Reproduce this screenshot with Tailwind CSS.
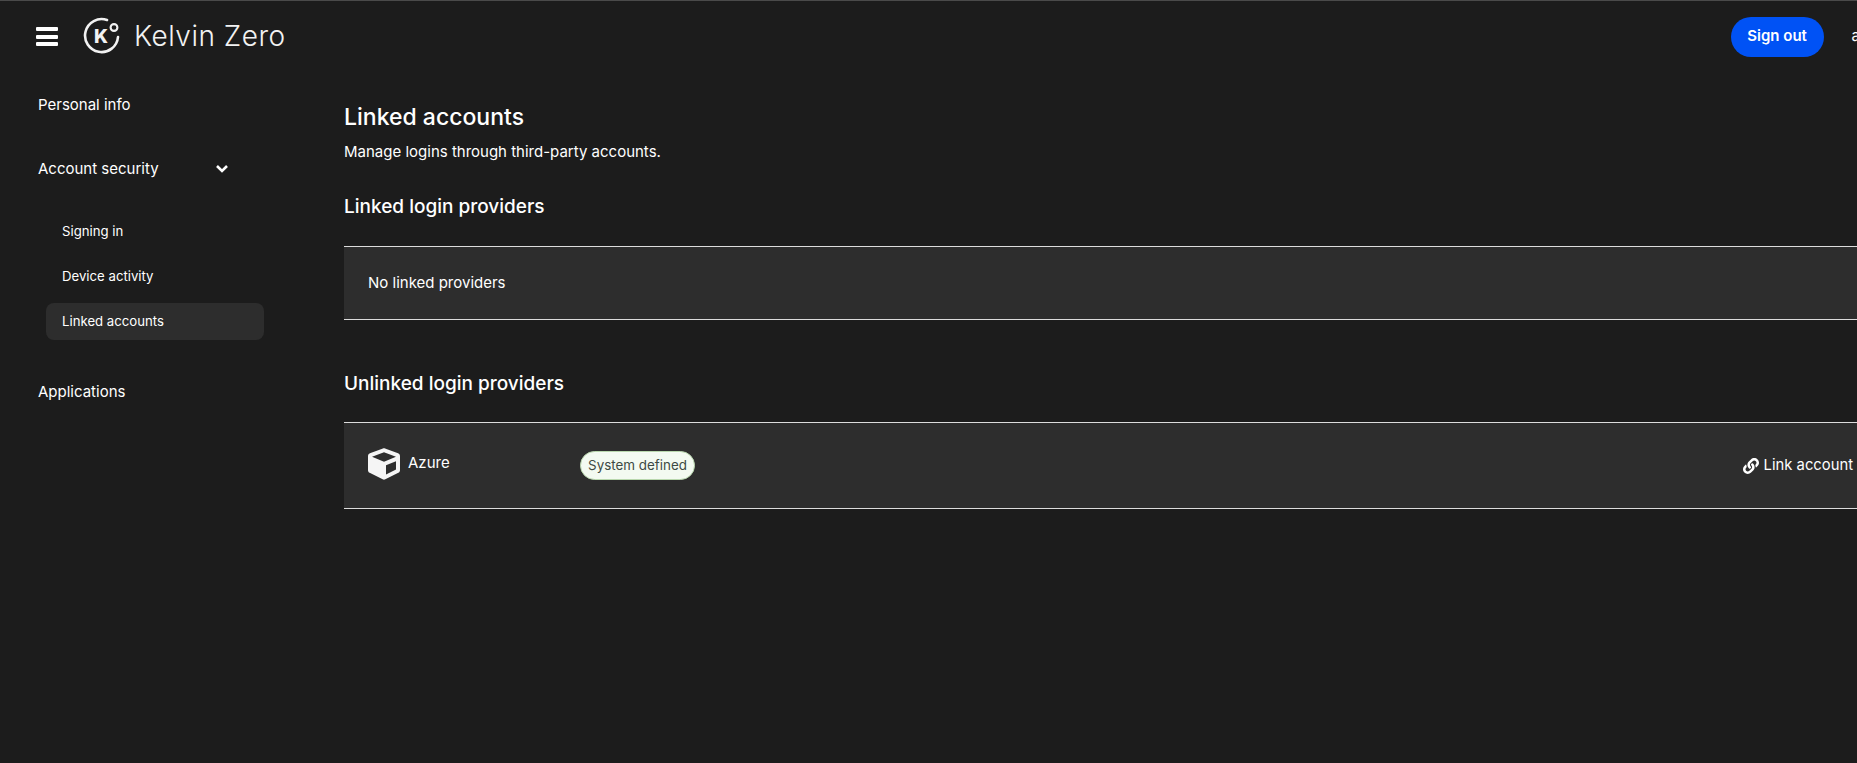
<!DOCTYPE html>
<html lang="en">
<head>
  <meta charset="UTF-8" />
  <title>Linked accounts</title>
  <script src="https://cdn.jsdelivr.net/npm/@tailwindcss/browser@4"></script>
</head>
<body class="bg-[#1c1c1c] text-white font-['Inter','Liberation_Sans',sans-serif] h-screen overflow-hidden">
  <div class="w-[1890px] h-full border-t border-[#4a4a4a]">

    <!-- Header -->
    <header class="h-[71px] flex items-center">
      <button class="ml-9 w-[22px] h-[19px] flex flex-col justify-between">
        <span class="block h-[4px] bg-white rounded-[1px]"></span>
        <span class="block h-[4px] bg-white rounded-[1px]"></span>
        <span class="block h-[4px] bg-white rounded-[1px]"></span>
      </button>
      <svg class="ml-[25px] mb-[1px]" width="38" height="38" viewBox="0 0 38 38" fill="none">
        <path d="M24 3 A16.5 16.5 0 1 0 35 20" stroke="#f2f2f2" stroke-width="2.6" stroke-linecap="round" />
        <circle cx="31" cy="10.5" r="3.4" stroke="#f2f2f2" stroke-width="2.1" />
        <text x="11" y="26" font-family="Inter, sans-serif" font-size="19" font-weight="800" fill="#f2f2f2">K</text>
      </svg>
      <span class="ml-[13px] mb-[2px] text-[28px] font-light tracking-[0.5px] text-[#f2f2f2]">Kelvin Zero</span>
      <div class="ml-auto flex items-center">
        <button class="w-[93px] h-10 rounded-full bg-[#0052f5] text-[15px] font-semibold">Sign out</button>
        <span class="ml-[28px] mr-[30px] text-[15px]">a</span>
      </div>
    </header>

    <div class="flex">
      <!-- Sidebar -->
      <nav class="w-[344px] shrink-0 pl-[38px] text-[15px]">
        <a class="flex items-center h-6 mt-[21px]">Personal info</a>
        <a class="flex items-center h-6 mt-10 w-[191px] justify-between">
          Account security
          <svg width="14" height="10" viewBox="0 0 14 10" fill="none" stroke="white" stroke-width="2.6"><path d="M2 2 L7 7 L12 2" /></svg>
        </a>
        <ul class="mt-[32px] -ml-[38px] pl-[46px] text-[13.2px]">
          <li class="w-[218px] h-[37px] pl-4 flex items-center">Signing in</li>
          <li class="w-[218px] h-[37px] pl-4 flex items-center mt-2">Device activity</li>
          <li class="w-[218px] h-[37px] pl-4 flex items-center mt-2 bg-[#2d2d2d] rounded-lg">Linked accounts</li>
        </ul>
        <a class="flex items-center h-6 mt-[40px]">Applications</a>
      </nav>

      <!-- Main -->
      <main class="w-[1533px] pt-[29px]">
        <h1 class="text-[23px] font-medium leading-8">Linked accounts</h1>
        <p class="text-[15px] leading-5 mt-[9px]">Manage logins through third-party accounts.</p>

        <h2 class="text-[19px] font-medium leading-7 mt-[31px]">Linked login providers</h2>
        <div class="mt-[25px] h-[74px] border-y border-[#dcdcdc] bg-[#2d2d2d] pl-6 flex items-center text-[15px]">
          No linked providers
        </div>

        <h2 class="text-[19px] font-medium leading-7 mt-[50px]">Unlinked login providers</h2>
        <div class="mt-[24px] h-[87px] border-y border-[#dcdcdc] bg-[#2d2d2d] pl-6 pr-6 flex items-center">
          <div class="w-[212px] flex items-center gap-2 mb-1">
            <svg class="w-8 h-8" viewBox="0 0 512 512" fill="#f5f5f5"><path d="M239.1 6.3l-208 78c-18.7 7-31.1 25-31.1 45v225.1c0 18.2 10.3 34.8 26.5 42.9l208 104c13.5 6.8 29.4 6.8 42.9 0l208-104c16.3-8.1 26.5-24.8 26.5-42.9V129.3c0-20-12.4-37.9-31.1-44.9l-208-78C262 2.2 250 2.2 239.1 6.3zM256 68.4l192 72v1.1l-192 78-192-78v-1.1l192-72zm32 356V275.5l160-65v133.9l-160 80z"/></svg>
            <span class="text-[15px]">Azure</span>
          </div>
          <span class="h-[29px] w-[115px] flex items-center justify-center rounded-full bg-[#f3faf1] border border-[#b9d8ae] text-[13.4px] text-[#3d4a44]">System defined</span>
          <a class="ml-auto flex items-center gap-[5px] text-[14.8px]">
            <svg class="w-4 h-4" viewBox="0 0 512 512" fill="white"><path d="M326.612 185.391c59.747 59.809 58.927 155.698.36 214.59-.11.12-.24.25-.36.37l-67.2 67.2c-59.27 59.27-155.699 59.262-214.96 0-59.27-59.26-59.27-155.7 0-214.96l37.106-37.106c9.84-9.84 26.786-3.3 27.294 10.606.648 17.722 3.826 35.527 9.69 52.721 1.986 5.822.567 12.262-3.783 16.612l-13.087 13.087c-28.026 28.026-28.905 73.66-1.155 101.96 28.024 28.579 74.086 28.749 102.325.51l67.2-67.19c28.191-28.191 28.073-73.757 0-101.83-3.701-3.694-7.429-6.564-10.341-8.569a16.037 16.037 0 0 1-6.947-12.606c-.396-10.567 3.348-21.456 11.698-29.806l21.054-21.055c5.521-5.521 14.182-6.199 20.584-1.731a152.482 152.482 0 0 1 20.522 17.197zM467.547 44.449c-59.261-59.262-155.69-59.27-214.96 0l-67.2 67.2c-.12.12-.25.25-.36.37-58.566 58.892-59.387 154.781.36 214.59a152.454 152.454 0 0 0 20.521 17.196c6.402 4.468 15.064 3.789 20.584-1.731l21.054-21.055c8.35-8.35 12.094-19.239 11.698-29.806a16.037 16.037 0 0 0-6.947-12.606c-2.912-2.005-6.64-4.875-10.341-8.569-28.073-28.073-28.191-73.639 0-101.83l67.2-67.19c28.239-28.239 74.3-28.069 102.325.51 27.75 28.3 26.872 73.934-1.155 101.96l-13.087 13.087c-4.35 4.35-5.769 10.79-3.783 16.612 5.864 17.194 9.042 34.999 9.69 52.721.509 13.906 17.454 20.446 27.294 10.606l37.106-37.106c59.271-59.259 59.271-155.699.001-214.959z"/></svg>
            Link account
          </a>
        </div>
      </main>
    </div>
  </div>
</body>
</html>
